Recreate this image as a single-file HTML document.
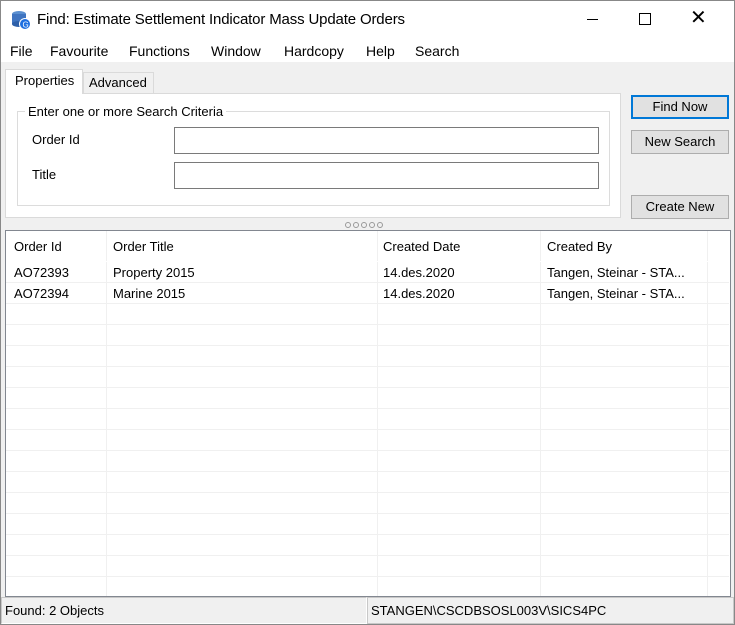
<!DOCTYPE html><html><head><style>
*{margin:0;padding:0;box-sizing:border-box}
body{width:735px;height:625px;overflow:hidden;font-family:"Liberation Sans",sans-serif;font-size:12px;color:#000;background:#fff;position:relative}
.a{position:absolute}
.btn{position:absolute;background:#e1e1e1;border:1px solid #adadad;font-size:13px;text-align:center;line-height:21px}
.vl{position:absolute;top:231px;width:1px;height:365px;background:#f0f0f0}
.hl{position:absolute;left:6px;width:723px;height:1px;background:#f0f0f0}
</style></head><body>
<div class="a" style="left:0;top:0;width:735px;height:625px;border:1px solid #888"></div>
<svg class="a" style="left:10px;top:9px" width="22" height="22" viewBox="0 0 22 22"><ellipse cx="9" cy="5" rx="7" ry="3" fill="#5a8fd0"/><rect x="2" y="5" width="14" height="10" fill="#3f74c0"/><ellipse cx="9" cy="15" rx="7" ry="3" fill="#2d5fa8"/><circle cx="15" cy="15" r="5.5" fill="#1e6fe0" stroke="#fff"/><text x="12.5" y="18.5" font-size="8" fill="#fff" font-family="Liberation Sans">G</text></svg>
<div class="a" style="left:37px;top:11px;font-size:15px;letter-spacing:-0.15px">Find: Estimate Settlement Indicator Mass Update Orders</div>
<div class="a" style="left:587px;top:19px;width:11px;height:1px;background:#000"></div>
<div class="a" style="left:639px;top:13px;width:12px;height:12px;border:1px solid #000"></div>
<div class="a" style="left:690px;top:7px;font-size:20px;line-height:22px">✕</div>
<div class="a" style="left:10px;top:43px;font-size:14px">File</div>
<div class="a" style="left:50px;top:43px;font-size:14px">Favourite</div>
<div class="a" style="left:129px;top:43px;font-size:14px">Functions</div>
<div class="a" style="left:211px;top:43px;font-size:14px">Window</div>
<div class="a" style="left:284px;top:43px;font-size:14px">Hardcopy</div>
<div class="a" style="left:366px;top:43px;font-size:14px">Help</div>
<div class="a" style="left:415px;top:43px;font-size:14px">Search</div>
<div class="a" style="left:1px;top:62px;width:733px;height:562px;background:#f0f0f0"></div>
<div class="a" style="left:5px;top:93px;width:616px;height:125px;background:#fff;border:1px solid #dadada"></div>
<div class="a" style="left:5px;top:69px;width:78px;height:25px;background:#fff;border:1px solid #dadada;border-bottom:none;font-size:13px;padding:3px 0 0 9px">Properties</div>
<div class="a" style="left:83px;top:72px;width:71px;height:21px;background:#f0f0f0;border:1px solid #dadada;border-bottom:none;font-size:13px;padding:2px 0 0 5px">Advanced</div>
<div class="a" style="left:17px;top:111px;width:593px;height:95px;border:1px solid #dcdcdc"></div>
<div class="a" style="left:25px;top:104px;background:#fff;padding:0 3px;font-size:13px">Enter one or more Search Criteria</div>
<div class="a" style="left:32px;top:132px;font-size:13px">Order Id</div>
<div class="a" style="left:32px;top:167px;font-size:13px">Title</div>
<div class="a" style="left:174px;top:127px;width:425px;height:27px;border:1px solid #7a7a7a;background:#fff"></div>
<div class="a" style="left:174px;top:162px;width:425px;height:27px;border:1px solid #7a7a7a;background:#fff"></div>
<div class="btn" style="left:631px;top:95px;width:98px;height:24px;border:2px solid #0078d7;line-height:19px">Find Now</div>
<div class="btn" style="left:631px;top:130px;width:98px;height:24px">New Search</div>
<div class="btn" style="left:631px;top:195px;width:98px;height:24px">Create New</div>
<svg class="a" style="left:344px;top:221px" width="50" height="8"><g fill="none" stroke="#999"><circle cx="4" cy="4" r="2.5"/><circle cx="12" cy="4" r="2.5"/><circle cx="20" cy="4" r="2.5"/><circle cx="28" cy="4" r="2.5"/><circle cx="36" cy="4" r="2.5"/></g></svg>
<div class="a" style="left:5px;top:230px;width:726px;height:367px;background:#fff;border:1px solid #828790"></div>
<div class="vl" style="left:106px"></div><div class="vl" style="left:377px"></div><div class="vl" style="left:540px"></div><div class="vl" style="left:707px"></div>
<div class="hl" style="top:261px;background:#fff"></div>
<div class="hl" style="top:282px"></div><div class="hl" style="top:303px"></div><div class="hl" style="top:324px"></div><div class="hl" style="top:345px"></div><div class="hl" style="top:366px"></div><div class="hl" style="top:387px"></div><div class="hl" style="top:408px"></div><div class="hl" style="top:429px"></div><div class="hl" style="top:450px"></div><div class="hl" style="top:471px"></div><div class="hl" style="top:492px"></div><div class="hl" style="top:513px"></div><div class="hl" style="top:534px"></div><div class="hl" style="top:555px"></div><div class="hl" style="top:576px"></div>
<div class="a" style="left:14px;top:239px;font-size:13px">Order Id</div>
<div class="a" style="left:113px;top:239px;font-size:13px">Order Title</div>
<div class="a" style="left:383px;top:239px;font-size:13px">Created Date</div>
<div class="a" style="left:547px;top:239px;font-size:13px">Created By</div>
<div class="a" style="left:14px;top:265px;font-size:13px">AO72393</div>
<div class="a" style="left:113px;top:265px;font-size:13px">Property 2015</div>
<div class="a" style="left:383px;top:265px;font-size:13px">14.des.2020</div>
<div class="a" style="left:547px;top:265px;font-size:13px">Tangen, Steinar - STA...</div>
<div class="a" style="left:14px;top:286px;font-size:13px">AO72394</div>
<div class="a" style="left:113px;top:286px;font-size:13px">Marine 2015</div>
<div class="a" style="left:383px;top:286px;font-size:13px">14.des.2020</div>
<div class="a" style="left:547px;top:286px;font-size:13px">Tangen, Steinar - STA...</div>
<div class="a" style="left:1px;top:597px;width:366px;height:27px;border:1px solid #c8c8c8;border-right-color:#fff;border-bottom-color:#fff"></div>
<div class="a" style="left:367px;top:597px;width:367px;height:27px;border:1px solid #c8c8c8"></div>
<div class="a" style="left:5px;top:603px;font-size:13px">Found: 2 Objects</div>
<div class="a" style="left:371px;top:603px;font-size:13px">STANGEN\CSCDBSOSL003V\SICS4PC</div>
</body></html>
